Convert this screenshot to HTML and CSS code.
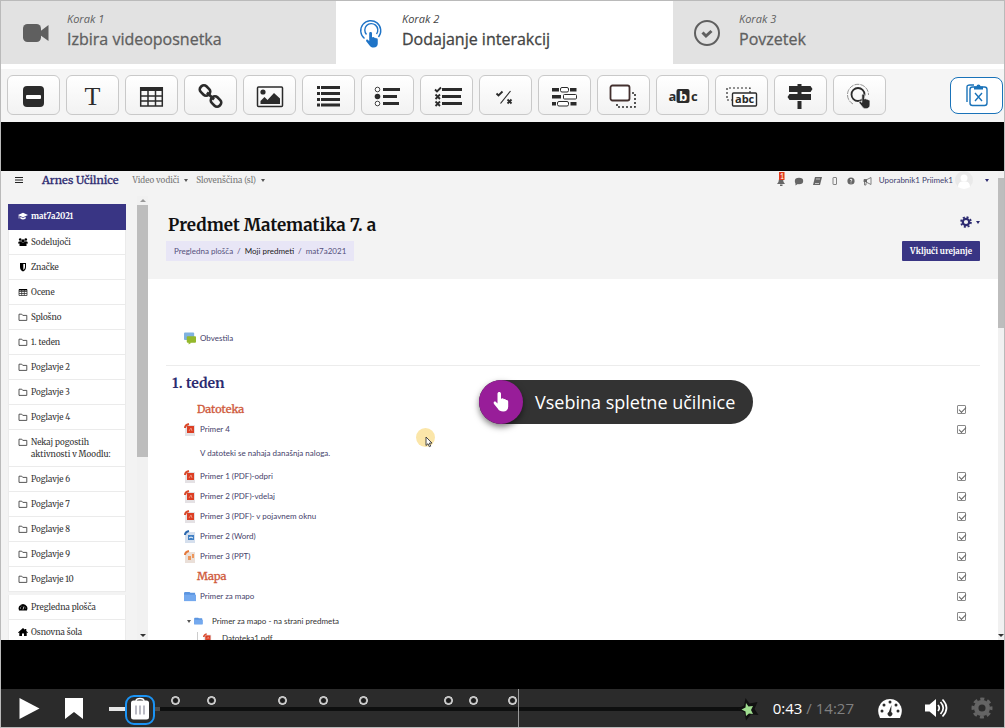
FILE: index.html
```html
<!DOCTYPE html>
<html lang="sl">
<head>
  <meta charset="UTF-8" />
  <meta name="viewport" content="width=device-width, initial-scale=1" />
  <title>Dodajanje interakcij</title>
  <link rel="stylesheet" href="styles.css">
</head>
<body>
  <!-- shared icons -->
  <svg class="defs" width="0" height="0">
    <symbol id="folder" viewBox="0 0 10 10"><path d="M1 2.2h2.8l1 1.2h4v5H1z" fill="none" stroke="#444" stroke-width=".9" stroke-linejoin="round"/></symbol>
    <symbol id="pdf" viewBox="0 0 12 13"><path d="M2 2h9v11H1V4z" fill="#e4e1e4"/><path d="M3 3h7v7H3z" fill="#dc3f24"/><path d="M1 5Q1 2 5 1" fill="none" stroke="#d94a2b" stroke-width="2"/><path d="M5 8l2-3 1 3" fill="none" stroke="#f5a08c" stroke-width=".8"/></symbol>
    <symbol id="word" viewBox="0 0 12 13"><path d="M2 2h9v11H1V4z" fill="#d5dfed"/><path d="M4 5h6v5H4z" fill="#3f7fc4"/><path d="M1 5Q1 2 5 1" fill="none" stroke="#2b68ae" stroke-width="2"/><path d="M5 8l2-1 2 1" fill="none" stroke="#fff"/></symbol>
    <symbol id="ppt" viewBox="0 0 12 13"><path d="M2 2h9v11H1V4z" fill="#eadfd8"/><path d="M4 6h3v4H4zM8 4h2v4H8z" fill="#ee965a"/><path d="M1 5Q1 2 5 1" fill="none" stroke="#e5793a" stroke-width="2"/></symbol>
    <symbol id="bluefolder" viewBox="0 0 13 12"><path d="M1 1h5l1 1h5v9H0V2z" fill="#5b95e0"/><path d="M0 4h13v7H0z" fill="#74a9ee"/></symbol>
    <symbol id="hand" viewBox="0 0 16 20"><path d="M4.5 1.8c0-2.4 3.5-2.4 3.5 0v5l1.1-.4c.8-.2 1.5.1 1.8.8 1-.4 1.8 0 2.1.8 1.2-.2 2.2.4 2.2 1.7v5.1c0 3-2 4.7-5 4.7-2.700 0-4.200-.8-5.500-3L1 12c-1.200-2 .8-3.200 2-2l1.500 1.400z"/></symbol>
  </svg>

  <div class="editor">
    <nav class="steps">
      <a class="step" href="#video">
        <svg class="step-icon" viewBox="0 0 30 30"><rect x="2" y="6" width="18" height="18" rx="4.500" fill="#5f5f5f"/><path d="M19 13.500L27.500 7v16L19 17z" fill="#5f5f5f"/></svg>
        <span><em>Korak 1</em><b>Izbira videoposnetka</b></span>
      </a>
      <a class="step active" href="#interakcije">
        <svg class="step-icon" viewBox="0 0 30 30"><g fill="none" stroke="#1f74c7"><path d="M8.500 20.500a10 10 0 1 1 14-1.500" stroke-width="1.400"/><path d="M10.500 16.500a6.500 6.500 0 1 1 10-.500" stroke-width="1.400"/></g><use href="#hand" x="8" y="14" width="16" height="16" fill="#1f74c7"/></svg>
        <span><em>Korak 2</em><b>Dodajanje interakcij</b></span>
      </a>
      <a class="step" href="#povzetek">
        <svg class="step-icon" viewBox="0 0 30 30"><circle cx="14" cy="15" r="12" fill="none" stroke="#5f5f5f" stroke-width="2"/><path d="M9.500 14.500l3.500 3.500 5.500-5" fill="none" stroke="#5f5f5f" stroke-width="3"/></svg>
        <span><em>Korak 3</em><b>Povzetek</b></span>
      </a>
    </nav>

    <div class="toolbar">
      <button class="tool" aria-label="Oznaka"><svg viewBox="0 0 33 28"><rect x="6" y="5" width="21" height="21" rx="4"/><rect x="9" y="14" width="15" height="4" rx="1" fill="#fff"/></svg></button>
      <button class="tool tool-text">T</button>
      <button class="tool" aria-label="Tabela"><svg viewBox="0 0 33 28"><path d="M5 6h23v4H5z"/><path d="M5.700 6v19h21.600V6M5 15h23M5 20h23M5 25h23M13 9v16M20.500 9v16" fill="none" stroke="#2b2b2b" stroke-width="1.500"/></svg></button>
      <button class="tool" aria-label="Povezava"><svg viewBox="0 0 33 28"><g fill="none" stroke="#2b2b2b" stroke-width="2.600"><rect x="5.500" y="5.500" width="11" height="8" rx="3.500" transform="rotate(45 11 9.500)"/><rect x="16.500" y="16.500" width="11" height="8" rx="3.500" transform="rotate(45 22 20.500)"/><path d="M13 11.500l7 7"/></g></svg></button>
      <button class="tool" aria-label="Slika"><svg viewBox="0 0 33 28"><rect x="4.500" y="6" width="25" height="19.500" rx="1" fill="none" stroke="#2b2b2b" stroke-width="1.500"/><circle cx="10" cy="11" r="2.600"/><path d="M7.500 23v-3l4-4 3 3 6.500-7 6 5.500V23z"/></svg></button>
      <button class="tool" aria-label="Izjave"><svg viewBox="0 0 33 28"><path d="M5 5h3v3H5zM9 5h19v3H9zM5 11h3v3H5zM9 11h19v3H9zM5 17h3v3H5zM9 17h19v3H9zM5 22.500h3v3H5zM9 22.500h19v3H9z"/></svg></button>
      <button class="tool" aria-label="Ena izbira"><svg viewBox="0 0 33 28"><circle cx="6.500" cy="8.500" r="2.300" fill="#fff" stroke="#2b2b2b" stroke-width=".9"/><circle cx="6.500" cy="15.500" r="2.800"/><circle cx="6.500" cy="22.500" r="2.300" fill="#fff" stroke="#2b2b2b" stroke-width=".9"/><path d="M12 7h17v3H12zM12 14h14v3H12zM12 21h16v3H12z"/></svg></button>
      <button class="tool" aria-label="Več izbir"><svg viewBox="0 0 33 28"><path d="M5 8.500l2 2 4-4M5.500 13.500l4.500 4.500m0-4.500L5.500 18M5.500 20.500L10 25m0-4.500L5.500 25" fill="none" stroke="#2b2b2b" stroke-width="1.800"/><path d="M12 7h20v3H12zM12 14h19v3H12zM12 21h20v3H12z"/></svg></button>
      <button class="tool" aria-label="Drži ali ne drži"><svg viewBox="0 0 33 28"><path d="M7.500 12.500l2 2 4-4M18.500 18.500l4 4m0-4l-4 4" fill="none" stroke="#2b2b2b" stroke-width="1.800"/><path d="M11.500 22.500L21.500 10" stroke="#2b2b2b" stroke-width="1.200"/></svg></button>
      <button class="tool" aria-label="Vstavi besede"><svg viewBox="0 0 33 28"><path d="M4 7h7v3.500H4zM22 7h6.500v3.500H22zM4 14h9v3.500H4zM4 21h4v3.500H4zM22.500 21h6v3.500h-6z"/><g fill="#fff" stroke="#2b2b2b"><rect x="12.500" y="6.500" width="8" height="4.500" rx="1.500"/><rect x="15.500" y="13.500" width="13" height="4.500" rx="1"/><rect x="9.500" y="20.500" width="11" height="4.500" rx="1.500"/></g></svg></button>
      <button class="tool" aria-label="Povleci in spusti"><svg viewBox="0 0 33 28"><path d="M10 23v3h18V12h-4" fill="none" stroke="#2b2b2b" stroke-width="1.600" stroke-dasharray="2 2"/><rect x="3.500" y="4.500" width="19" height="15" rx="2" fill="#fff" stroke="#43302e" stroke-width="1.800"/></svg></button>
      <button class="tool" aria-label="Označi besede"><svg viewBox="0 0 33 28"><rect x="10.500" y="8" width="13" height="14" rx="2"/><text x="2.500" y="20">a</text><text x="13" y="20" fill="#fff">b</text><text x="25" y="20">c</text></svg></button>
      <button class="tool" aria-label="Povleci besedilo"><svg viewBox="0 0 33 28"><path d="M8 19H2V7h23v5" fill="none" stroke="#2b2b2b" stroke-width="1.200" stroke-dasharray="2 2"/><rect x="7.500" y="12" width="24" height="13" rx="1" fill="#fff" stroke="#2b2b2b" stroke-width="1.400"/><text class="small" x="10" y="22">abc</text></svg></button>
      <button class="tool" aria-label="Razpotje"><svg viewBox="0 0 33 28"><path d="M13.500 3h4v2h9l2 3-2 3H5V5h8.500zM13.500 11h4v2H27v6H5.500L3.500 16l2-3h8zM13.500 20h4v8h-4z"/></svg></button>
      <button class="tool" aria-label="Aktivna točka"><svg viewBox="0 0 33 28"><path d="M10 23a10.500 10.500 0 1 1 15.500-9" fill="none" stroke="#777" stroke-width=".8" stroke-dasharray="5 1"/><circle cx="15" cy="13.500" r="6.500" fill="none" stroke="#2b2b2b" stroke-width="1.800"/><use href="#hand" x="14" y="13" width="15" height="15" stroke="#f5f5f5" stroke-width=".8"/></svg></button>
      <button class="paste" aria-label="Prilepi"><svg viewBox="0 0 24 24"><g fill="none" stroke="#1a73b9" stroke-width="1.400"><rect x="5" y="4" width="17" height="18.500" rx="2.500"/><path d="M2 19V4Q2 2 5 2h4M10 10l7 8m0-8l-7 8"/></g><path d="M9 6.500V3.500h2.500a2 2 0 0 1 4 0H18v3z" fill="#1a73b9"/></svg></button>
    </div>

    <div class="video">
      <div class="frame">
        <div class="site">
          <header class="site-nav">
            <svg class="burger" viewBox="0 0 8 8"><path d="M0 1.500h8M0 4h8M0 6.500h8" stroke="#222" stroke-width="1.200"/></svg>
            <a class="brand" href="#">Arnes Učilnice</a>
            <a class="menu" href="#">Video vodiči <i class="caret"></i></a>
            <a class="menu" href="#">Slovenščina (sl) <i class="caret"></i></a>
            <div class="user">
              <svg class="nav-icons" viewBox="0 0 98 18" fill="#666"><path d="M2 13q2-2 2-5 2-3 4 0 0 3 2 5zM5 13.500h2.500v1.500H5z"/><rect x="4" y="1" width="5.500" height="8" fill="#e23a1b"/><text x="5" y="8" font-size="7" fill="#fff">1</text><ellipse cx="24" cy="10" rx="4.200" ry="3.200"/><path d="M20.500 11v3.500l3-2z"/><path d="M40 6h7l-2 8h-7z"/><path d="M41 8h4M40 12.500h4" stroke="#eee" stroke-width=".7"/><rect x="58" y="6.500" width="3.500" height="7" rx=".5" fill="none" stroke="#666" stroke-width=".8"/><circle cx="76" cy="10" r="3.600"/><path d="M75 8.800q1-1.300 2 0 0 .8-1 1.200v.6m0 1v.8" stroke="#f3f3f3" stroke-width=".9" fill="none"/><path d="M89 8.500h3l4-2v7l-4-2h-1v2.500h-1.500V11H89z" fill="none" stroke="#666" stroke-width=".8"/><path d="M89 8.500h3v2.500h-3z"/></svg>
              <span>Uporabnik1 Priimek1</span>
              <svg class="avatar" viewBox="0 0 18 18"><circle cx="9" cy="9" r="9" fill="#e9e9e9"/><circle cx="9" cy="7" r="3.500" fill="#fff"/><path d="M3 16q0-5 4-5.500h4q4 .5 4 5.500-6 4-12 0z" fill="#fff"/></svg>
              <i class="caret dark"></i>
            </div>
          </header>

          <div class="columns">
            <aside class="sidebar">
              <ul>
                <li class="current"><svg viewBox="0 0 10 10" fill="#fff"><path d="M0 4l5-2.200L10 4 5 6.200zM2.300 5.700L5 7l2.700-1.300v1.800Q5 9.500 2.300 7.500zM.7 4.500h.7v3H.7z"/></svg>mat7a2021</li>
                <li><svg viewBox="0 0 10 10"><circle cx="2.200" cy="2.500" r="1.300"/><circle cx="7.800" cy="2.500" r="1.300"/><circle cx="5" cy="4" r="1.800"/><path d="M0 6.500Q0 4 2.500 4.200L5 6l2.500-1.800Q10 4 10 6.500H8.500V9h-7V6.500z"/></svg>Sodelujoči</li>
                <li><svg viewBox="0 0 10 10"><path d="M2 1h6v4q0 3-3 4.500Q2 8 2 5z"/><path d="M5.300 2h1.700v3q0 2-1.700 3z" fill="#fff"/></svg>Značke</li>
                <li><svg viewBox="0 0 10 10"><path d="M1 2.500h8v6H1zM1 4.500h8M1 6.500h8M3.700 2.500v6M6.300 2.500v6" fill="none" stroke="#333" stroke-width=".8"/><path d="M1 2h8v1.500H1z"/></svg>Ocene</li>
                <li><svg><use href="#folder"/></svg>Splošno</li>
                <li><svg><use href="#folder"/></svg>1. teden</li>
                <li><svg><use href="#folder"/></svg>Poglavje 2</li>
                <li><svg><use href="#folder"/></svg>Poglavje 3</li>
                <li><svg><use href="#folder"/></svg>Poglavje 4</li>
                <li><svg><use href="#folder"/></svg>Nekaj pogostih<br>aktivnosti v Moodlu:</li>
                <li><svg><use href="#folder"/></svg>Poglavje 6</li>
                <li><svg><use href="#folder"/></svg>Poglavje 7</li>
                <li><svg><use href="#folder"/></svg>Poglavje 8</li>
                <li><svg><use href="#folder"/></svg>Poglavje 9</li>
                <li><svg><use href="#folder"/></svg>Poglavje 10</li>
              </ul>
              <ul>
                <li><svg viewBox="0 0 10 10"><path d="M1 8.500Q0 6 1 4.500 2.500 2 5 2t4 2.500q1 1.500 0 4z"/><path d="M5 7.500l1-3M2 6h1M3 3.700l.6.600M7.500 6H8" stroke="#fff" stroke-width=".8"/></svg>Pregledna plošča</li>
                <li><svg viewBox="0 0 10 10"><path d="M0 5.500L5 1l2 1.800V2h1.300v2L10 5.500l-.6.500L8.700 5.500V9H6V6.500H4V9H1.300V5.500L.6 6z"/></svg>Osnovna šola</li>
              </ul>
            </aside>

            <div class="scrollbar"><i class="up"></i><div class="thumb"></div><i class="down"></i></div>

            <main>
              <div class="course-head">
                <div>
                  <h1>Predmet Matematika 7. a</h1>
                  <p class="crumbs"><a href="#">Pregledna plošča</a><span>/</span><a class="strong" href="#">Moji predmeti</a><span>/</span><a href="#">mat7a2021</a></p>
                </div>
                <div class="course-actions">
                  <span class="cog"><svg viewBox="0 0 12 12"><circle cx="6" cy="6" r="3.200" fill="none" stroke="#2d2b70" stroke-width="2.200"/><circle cx="6" cy="6" r="4.900" fill="none" stroke="#2d2b70" stroke-width="1.800" stroke-dasharray="2 1.850"/></svg><i class="caret dark"></i></span>
                  <button class="edit">Vključi urejanje</button>
                </div>
              </div>

              <div class="course">
                <div class="row intro"><svg viewBox="0 0 13 13"><rect width="11" height="8" rx="1" fill="#7fb2e0"/><rect x="3" y="4" width="10" height="7" rx="1" fill="#94b82c"/><path d="M5 10v3l3-2z" fill="#94b82c"/></svg><a href="#">Obvestila</a></div>
                <section>
                  <h2>1. teden</h2>
                  <div class="row"><h3>Datoteka</h3><input type="checkbox" aria-label="Datoteka" checked></div>
                  <div class="row"><svg><use href="#pdf"/></svg><a href="#">Primer 4</a><input type="checkbox" aria-label="Primer 4" checked></div>
                  <p class="note">V datoteki se nahaja današnja naloga.</p>
                  <div class="row"><svg><use href="#pdf"/></svg><a href="#">Primer 1 (PDF)-odpri</a><input type="checkbox" aria-label="Primer 1" checked></div>
                  <div class="row"><svg><use href="#pdf"/></svg><a href="#">Primer 2 (PDF)-vdelaj</a><input type="checkbox" aria-label="Primer 2" checked></div>
                  <div class="row"><svg><use href="#pdf"/></svg><a href="#">Primer 3 (PDF)- v pojavnem oknu</a><input type="checkbox" aria-label="Primer 3" checked></div>
                  <div class="row"><svg><use href="#word"/></svg><a href="#">Primer 2 (Word)</a><input type="checkbox" aria-label="Primer 2 Word" checked></div>
                  <div class="row"><svg><use href="#ppt"/></svg><a href="#">Primer 3 (PPT)</a><input type="checkbox" aria-label="Primer 3 PPT" checked></div>
                  <div class="row"><h3>Mapa</h3><input type="checkbox" aria-label="Mapa" checked></div>
                  <div class="row"><svg><use href="#bluefolder"/></svg><a href="#">Primer za mapo</a><input type="checkbox" aria-label="Primer za mapo" checked></div>
                  <div class="row tree-row">
                    <div class="tree">
                      <div class="tree-top"><i class="caret"></i><svg><use href="#bluefolder"/></svg>Primer za mapo - na strani predmeta</div>
                      <div class="tree-file"><svg><use href="#pdf"/></svg>Datoteka1.pdf</div>
                    </div>
                    <input type="checkbox" aria-label="Mapa na strani predmeta" checked>
                  </div>
                </section>
              </div>
            </main>
          </div>
        </div>
        <div class="scrollbar page-scroll"><div class="thumb"></div><i class="down"></i></div>
      </div>

      <div class="pointer"><svg viewBox="0 0 8 12"><path d="M1 1v8.500l2-1.800 1.300 3 1.400-.6-1.300-3H7z" fill="#fff" stroke="#333" stroke-width=".9"/></svg></div>
      <button class="hotspot"><span class="hotspot-icon"><svg viewBox="0 0 16 20" fill="#fff"><use href="#hand"/></svg></span><span class="hotspot-label">Vsebina spletne učilnice</span></button>
    </div>

    <div class="controls">
      <button class="control" aria-label="Predvajaj"><svg viewBox="0 0 24 24" fill="#fff"><path d="M2.500 2l20 10.500-20 10.500z"/></svg></button>
      <button class="control" aria-label="Zaznamki"><svg viewBox="0 0 24 24" fill="#fff"><path d="M2 2h18v21l-9-7-9 7z"/></svg></button>
      <div class="timeline">
        <div class="bar"><div class="buffered"></div><div class="played"></div></div>
        <i class="dot" style="left: 10.4%"></i>
        <i class="dot" style="left: 16%"></i>
        <i class="dot" style="left: 27.1%"></i>
        <i class="dot" style="left: 33.5%"></i>
        <i class="dot" style="left: 39.8%"></i>
        <i class="dot" style="left: 53.1%"></i>
        <i class="dot" style="left: 57.1%"></i>
        <i class="dot" style="left: 63.2%"></i>
        <i class="cue" style="left: 64.2%"></i>
        <button class="handle" style="left: 4.9%" aria-label="Položaj"><svg viewBox="0 0 26 26"><path d="M9 4q0-2.500 4-2.500T17 4" fill="none" stroke="#fff" stroke-width="1.400"/><rect x="4" y="3.500" width="18" height="19" rx="2.500" fill="#fff"/><path d="M9 8.500v9M13 8.500v9M17 8.500v9" stroke="#a9a9b5" stroke-width="1.600"/></svg></button>
        <svg class="star" viewBox="0 0 24 24"><path d="M10.500 1l4 5.500 8-1.500-3 7 4 6-7.500-.5-5 6-1.500-8L2 12l7-3.500z" fill="#111"/><path d="M11 6l2.500 3.500 4.500-.5-2 4 2 4-4-.5-3 2.500-.5-4.500-4-2 4-2z" fill="#a0dd90"/></svg>
      </div>
      <div class="time">0:43 <span>/ 14:27</span></div>
      <button class="control" aria-label="Hitrost"><svg viewBox="0 0 24 24"><path d="M2 22Q-1 16 1 10.500 4 3 12 3t11 7.500Q25 16 22 22z" fill="#fff"/><g fill="#2b2b2b"><circle cx="4" cy="15" r="1.500"/><circle cx="6" cy="9" r="1.500"/><circle cx="12" cy="6" r="1.500"/><circle cx="18" cy="9" r="1.500"/><circle cx="20" cy="15" r="1.500"/><path d="M13.500 9l-.3 7a2.300 2.300 0 1 1-2.400 0z"/></g></svg></button>
      <button class="control" aria-label="Glasnost"><svg viewBox="0 0 24 24"><path d="M1 8.500h4.500L12 3v18l-6.500-5.500H1z" fill="#fff"/><path d="M14 9q2.500 3 0 6M16.500 6q5.500 6 0 12M18.500 3.500q8 8.500 0 17" fill="none" stroke="#fff" stroke-width="1.700"/></svg></button>
      <button class="control" aria-label="Kakovost"><svg viewBox="0 0 24 24"><g fill="none" stroke="#646464"><circle cx="12" cy="12" r="5.800" stroke-width="4.500"/><circle cx="12" cy="12" r="9" stroke-width="3" stroke-dasharray="4 3.070" stroke-dashoffset="2"/></g></svg></button>
    </div>
  </div>
</body>
</html>
```

FILE: styles.css
```css
* {
  box-sizing: border-box;
}

body {
  margin: 0;
  font-family: "Open Sans", "Noto Sans", sans-serif;
  color: #333;
}

button {
  font-family: inherit;
  cursor: pointer;
}

a {
  color: inherit;
  text-decoration: none;
}

.defs {
  position: absolute;
}

.editor {
  border: 1px solid #bababa;
  background: #fff;
}

/* Steps */
.steps {
  display: grid;
  grid-template-columns: 335fr 337fr 331fr;
  margin-bottom: 5px;
}

.step {
  display: flex;
  align-items: center;
  gap: 16px;
  height: 63px;
  padding: 0 20px;
  background: #e2e2e2;
  color: #5f5f5f;
}

.step.active {
  background: #fff;
  color: #444;
}

.step-icon {
  width: 30px;
  height: 30px;
}

.step span {
  padding-bottom: 4px;
}

.step em {
  display: block;
  font-size: 11px;
  line-height: 16px;
}

.step b {
  display: block;
  font-size: 16px;
  line-height: 24px;
  font-weight: 500;
  -webkit-text-stroke: 0.3px;
}

/* Toolbar */
.toolbar {
  display: flex;
  align-items: center;
  gap: 6px;
  padding: 6px 1px 7px 6px;
  background: #f5f5f5;
}

.tool {
  display: flex;
  align-items: center;
  justify-content: center;
  width: 53px;
  height: 40px;
  padding: 0;
  border: 1px solid #c9c9c9;
  border-radius: 6px;
  background: linear-gradient(#fff, #f2f2f2);
}

.tool svg {
  width: 33px;
  height: 28px;
  fill: #2b2b2b;
  font: bold 13px "Open Sans", sans-serif;
}

.tool svg .small {
  font-size: 11px;
}

.tool-text {
  padding-top: 4px;
  font: 26px/28px "Liberation Serif", serif;
  color: #2b2b2b;
}

.paste {
  display: flex;
  align-items: center;
  justify-content: center;
  width: 53px;
  height: 37px;
  margin-left: auto;
  padding: 0;
  border: 1px solid #1a73b9;
  border-radius: 8px;
  background: #fff;
}

.paste svg {
  width: 24px;
  height: 24px;
}

/* Video */
.video {
  position: relative;
  padding: 49px 0;
  background: #000;
}

.frame {
  display: flex;
  height: 469px;
  overflow: hidden;
  background: #f3f3f3;
  font-family: "Source Sans Pro", Lato, "Noto Sans", sans-serif;
  font-size: 8px;
}

.site {
  flex: 1;
  min-width: 0;
}

.site-nav {
  display: flex;
  align-items: center;
  height: 18px;
  margin-bottom: 7px;
  padding: 0 9px 0 14px;
  font-family: Merriweather, "DejaVu Serif Condensed", "DejaVu Serif", serif;
}

.burger {
  width: 8px;
  height: 8px;
  margin-right: 19px;
}

.brand {
  margin-right: 14px;
  font-size: 11px;
  color: #2d2b70;
  -webkit-text-stroke: 0.3px;
}

.menu {
  margin-right: 8px;
  color: #777;
}

.caret {
  display: inline-block;
  margin-left: 3px;
  border: 2px solid transparent;
  border-top: 3px solid #555;
  border-bottom: 0;
  vertical-align: middle;
}

.caret.dark {
  border-top-color: #2d2b70;
}

.user {
  display: flex;
  align-items: center;
  margin-left: auto;
  font-family: "Source Sans Pro", Lato, "Noto Sans", sans-serif;
  color: #423f6e;
}

.nav-icons {
  width: 98px;
  height: 18px;
  margin-right: 6px;
}

.avatar {
  width: 18px;
  height: 18px;
  margin: 0 9px 0 2px;
}

.columns {
  display: flex;
}

.sidebar {
  width: 136px;
  padding: 8px 11px 0 7px;
  font-family: Merriweather, "DejaVu Serif Condensed", "DejaVu Serif", serif;
}

.sidebar ul {
  margin: 0 0 3px;
  padding: 0;
  list-style: none;
  background: #fff;
}

.sidebar li {
  position: relative;
  padding: 6px 0 6px 22px;
  border: 1px solid #ebebeb;
  border-top: 0;
  line-height: 12px;
  white-space: nowrap;
}

.sidebar li.current {
  padding-bottom: 7px;
  background: #393584;
  border-color: #393584;
  color: #fff;
  font-weight: bold;
}

.sidebar li svg {
  position: absolute;
  left: 9px;
  top: 7px;
  width: 10px;
  height: 10px;
}

.scrollbar {
  display: flex;
  flex-direction: column;
  width: 11px;
  height: 444px;
  background: #f1f1f1;
}

.scrollbar .thumb {
  height: 252px;
  background: #bdbdbd;
}

.up,
.down {
  align-self: center;
  border: 3px solid transparent;
}

.up {
  margin: 0 0 3px;
  border-bottom-color: #999;
}

.down {
  margin-top: auto;
  border-top-color: #333;
}

.page-scroll {
  width: 6px;
  height: auto;
  padding-top: 7px;
}

.page-scroll .thumb {
  height: 150px;
}

main {
  flex: 1;
  min-width: 0;
}

.course-head {
  display: flex;
  justify-content: space-between;
  height: 83px;
  padding: 17px 18px 0 18px;
}

h1,
h2,
h3 {
  margin: 0;
  font-family: Merriweather, "DejaVu Serif Condensed", "DejaVu Serif", serif;
  font-weight: bold;
}

h1 {
  padding-left: 2px;
  font-size: 17px;
  line-height: 24px;
  color: #111;
}

.crumbs {
  width: max-content;
  margin: 4px 0 0;
  padding: 4px 8px;
  background: #e8e6f6;
  line-height: 12px;
  color: #54517c;
}

.crumbs span {
  margin: 0 4px;
}

.crumbs .strong {
  color: #222;
}

.course-actions {
  display: flex;
  flex-direction: column;
  align-items: flex-end;
}

.cog {
  display: flex;
  align-items: center;
  height: 18px;
  margin-bottom: 10px;
}

.cog svg {
  width: 12px;
  height: 12px;
  margin-right: 1px;
}

.edit {
  height: 20px;
  padding: 0 8px;
  border: 0;
  border-radius: 1px;
  background: #393584;
  color: #fff;
  font: bold 8px Merriweather, "DejaVu Serif Condensed", "DejaVu Serif", serif;
}

.course {
  padding: 49px 18px 0;
  background: #fff;
}

.row {
  display: flex;
  align-items: center;
  height: 20px;
  padding: 0 14px 0 18px;
  color: #45426a;
}

.row svg {
  width: 12px;
  height: 13px;
  margin-right: 4px;
}

.row input {
  appearance: none;
  width: 9px;
  height: 9px;
  margin: 0 0 0 auto;
  border: 1px solid #8a8a8a;
  border-radius: 1px;
}

.row input:checked::before {
  content: "";
  display: block;
  width: 6px;
  height: 3px;
  margin: 1px 0 0 1px;
  border: solid #666;
  border-width: 0 0 1px 1px;
  transform: rotate(-45deg);
}

.intro {
  margin-bottom: 17px;
}

section {
  border-top: 1px solid #ececec;
}

h2 {
  padding: 6px 0 5px 6px;
  font-size: 14px;
  line-height: 22px;
  color: #2d2b70;
}

h3 {
  padding-left: 13px;
  font-size: 11px;
  font-weight: normal;
  color: #cf5a3c;
  -webkit-text-stroke: 0.3px;
}

.note {
  margin: 0;
  padding: 2px 0 0 34px;
  line-height: 25px;
  color: #45426a;
}

.tree-row {
  height: auto;
  align-items: flex-start;
  color: #333;
}

.tree-row input {
  margin-top: 6px;
}

.tree-top {
  display: flex;
  align-items: center;
  height: 26px;
  padding-top: 4px;
}

.tree-top svg {
  width: 9px;
  height: 8px;
  margin: 0 9px 0 3px;
}

.tree-file {
  display: flex;
  align-items: center;
  height: 12px;
  margin-left: 13px;
  padding-left: 5px;
  border-left: 1px solid #ccc;
}

.tree-file svg {
  width: 9px;
  height: 10px;
  margin-right: 10px;
}

.pointer {
  position: absolute;
  left: 415px;
  top: 306px;
  width: 19px;
  height: 19px;
  border-radius: 50%;
  background: #fbe6a9;
}

.pointer svg {
  width: 8px;
  height: 12px;
  margin: 8px 0 0 9px;
}

.hotspot {
  position: absolute;
  left: 478px;
  top: 258px;
  display: flex;
  align-items: center;
  height: 44px;
  padding: 0 18px 0 0;
  border: 0;
  border-radius: 22px;
  background: #333;
  color: #fff;
}

.hotspot-icon {
  display: flex;
  align-items: center;
  justify-content: center;
  width: 44px;
  height: 44px;
  margin-right: 12px;
  border-radius: 50%;
  background: #981d99;
  box-shadow: 0 3px 6px rgba(0, 0, 0, 0.5);
}

.hotspot-icon svg {
  width: 16px;
  height: 20px;
}

.hotspot-label {
  font-size: 18px;
}

/* Player controls */
.controls {
  display: flex;
  align-items: center;
  gap: 2px;
  height: 38px;
  padding-left: 6px;
  background: #2b2b2b;
}

.control {
  display: flex;
  align-items: center;
  justify-content: center;
  width: 44px;
  height: 38px;
  padding: 0;
  border: 0;
  background: none;
}

.control svg {
  width: 24px;
  height: 24px;
}

.timeline {
  position: relative;
  flex: 1;
  height: 38px;
  margin-left: 10px;
}

.bar {
  position: relative;
  height: 4px;
  margin-top: 18px;
  background: #0e0f0f;
}

.played,
.buffered {
  position: absolute;
  top: 0;
  left: 0;
  height: 4px;
}

.played {
  width: 5%;
  background: #e6e6e6;
}

.buffered {
  width: 8%;
  background: #4d4d4d;
}

.dot {
  position: absolute;
  top: 7px;
  width: 9px;
  height: 9px;
  margin-left: -4px;
  border: 1px solid #fff;
  border-radius: 50%;
  background: #1b1b1b;
  box-shadow: inset 0 0 0 1px #bbb;
}

.cue {
  position: absolute;
  top: 0;
  height: 38px;
  border-left: 1px solid #999;
}

.handle {
  position: absolute;
  top: 6px;
  width: 30px;
  height: 30px;
  margin-left: -15px;
  padding: 0;
  border: 2px solid #1a93f4;
  border-radius: 9px;
  background: #2b2b2b;
}

.handle svg {
  display: block;
  width: 26px;
  height: 26px;
}

.star {
  position: absolute;
  right: -12px;
  top: 8px;
  width: 24px;
  height: 24px;
}

.time {
  margin: 0 12px 0 24px;
  font-size: 15px;
  color: #fff;
  white-space: nowrap;
}

.time span {
  color: #808080;
}
```
